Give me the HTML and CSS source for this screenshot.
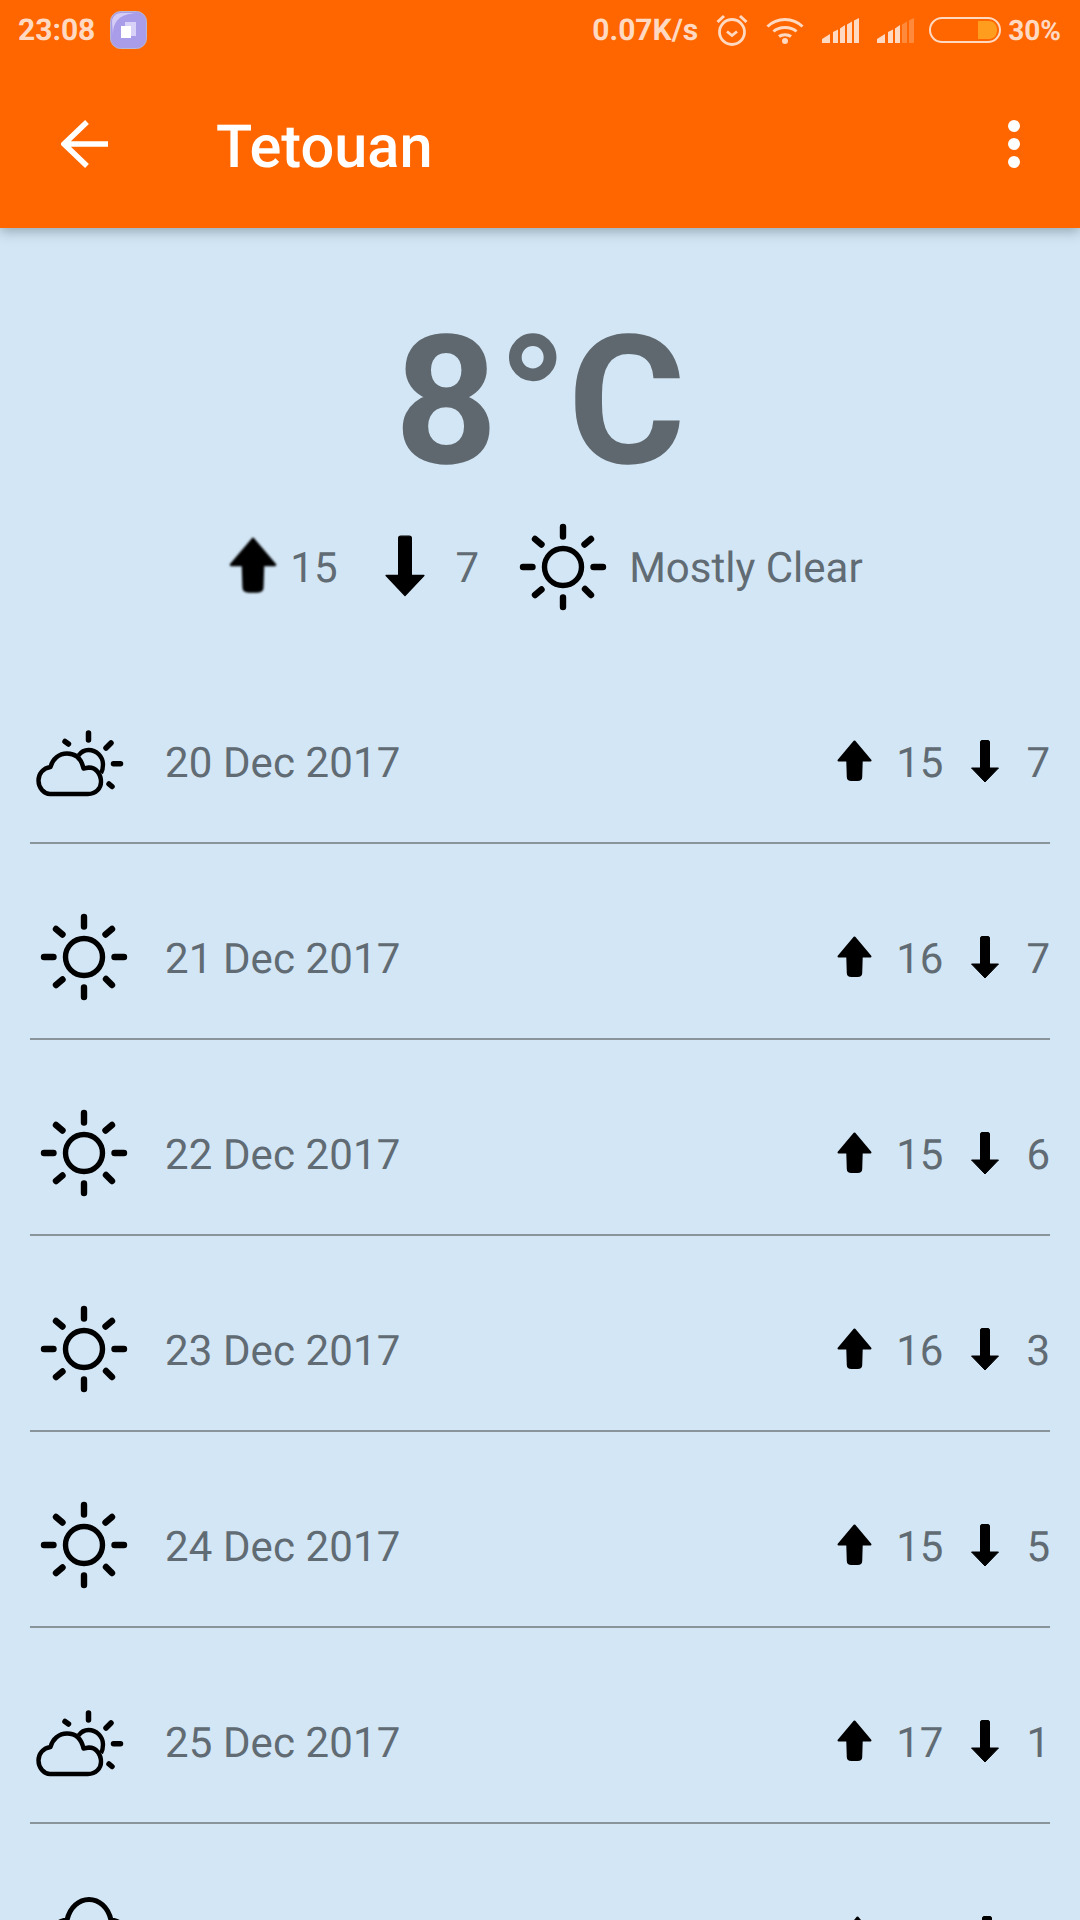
FILE: index.html
```html
<!DOCTYPE html>
<html lang="en">
<head>
<meta charset="utf-8">
<title>Tetouan</title>
<link rel="stylesheet" href="styles.css">
</head>
<body>
<svg class="defs" width="0" height="0" aria-hidden="true">
  <symbol id="sun" viewBox="0 0 88 88">
    <circle cx="44" cy="44" r="18.500" fill="none" stroke="#000" stroke-width="5.400"/>
    <g stroke="#000" stroke-width="6.400" stroke-linecap="round">
      <path d="M44 4V13.500M44 74.500V84M4 44H13.500M74.500 44H84M16 16L22.500 21.500M72 16L65.500 21.500M16 72L22.500 66.500M72 72L66 66"/>
    </g>
  </symbol>
  <symbol id="cloudsun" viewBox="0 0 90 70">
    <g fill="none" stroke="#000" stroke-width="4.400" stroke-linejoin="round">
      <path d="M44.500 25.500C47 22 50.500 20 54.500 20C62.500 20 69 26.500 69 34.500C69 37.500 68.500 40.500 67 43"/>
      <path d="M16 64H54C62 64 67 58 67 52C67 44 62 37.500 55 37.500L49.500 38.500C47 27 40 23.500 33 23.500C25 23.500 18.500 29 16.500 37C9 38 4.500 44 4.500 50.500C4.500 58 10 64 16 64Z"/>
    </g>
    <g stroke="#000" stroke-width="5.500" stroke-linecap="round">
      <path d="M54.500 3V10M77 13L72 18M79.500 33.700H86.500M75 54L78 56.500M31 11.500L34.500 14"/>
    </g>
  </symbol>
  <symbol id="cloud" viewBox="0 0 88 88">
    <path d="M10 50C10 36 16 28 27 27C30 14 39 6.500 49 6.500C59 6.500 68 14 71 27C82 28 88 36 88 50" fill="none" stroke="#000" stroke-width="5"/>
  </symbol>
  <symbol id="up" viewBox="0 0 34 42" preserveAspectRatio="none">
    <path d="M17 1.500L32.500 20.500H24L23.500 37C23.500 39 22 40 20 40H14C12 40 10.500 39 10.500 37L10 20.500H1.500Z" fill="#000" stroke="#000" stroke-width="2" stroke-linejoin="round"/>
  </symbol>
  <symbol id="down" viewBox="0 0 30 44" preserveAspectRatio="none">
    <path d="M10.500 3C10.500 2 11 1.500 12 1.500H18C19 1.500 19.500 2 19.500 3V29H28.500L15 43L1.500 29H10.500Z" fill="#000" stroke="#000" stroke-linejoin="round"/>
  </symbol>
</svg>

<header class="header">
  <div class="status">
    <span class="status-time">23:08</span>
    <svg class="app-badge" viewBox="0 0 37 38">
      <rect x="0.500" y="0.500" width="36" height="37" rx="10" fill="#a99ce9" stroke="#b9b9d0"/>
      <path d="M3 24C3 10 10 3 26 2H11C6 2 2 6 2 11Z" fill="#d5ccf6"/>
      <rect x="15" y="11" width="11" height="14" fill="#d8d2f8"/>
      <rect x="11" y="15" width="10" height="12" fill="#fff"/>
    </svg>
    <span class="status-spacer"></span>
    <span class="status-text">0.07K/s</span>
    <svg class="ic-alarm" viewBox="0 0 32 32">
      <g fill="none" stroke="#ffd9c2" stroke-width="2.800">
        <circle cx="16" cy="18" r="12.500"/>
        <path d="M11 17.500L16 21.500L21 17.500"/>
      </g>
      <path d="M1.500 8L8 2M30.500 8L24 2" stroke="#ffd9c2" stroke-width="3" fill="none"/>
    </svg>
    <svg class="ic-wifi" viewBox="0 0 38 28">
      <g fill="none" stroke="#ffd9c2" stroke-width="3">
        <path d="M1.500 10.500C11 1 27 1 36.500 10.500"/>
        <path d="M7.500 15.500C13 10 25 10 30.500 15.500"/>
        <path d="M13 20.500C16 18 22 18 25 20.500"/>
      </g>
      <circle cx="19" cy="25" r="3" fill="#ffd9c2"/>
    </svg>
    <svg class="ic-signal" viewBox="0 0 37 25">
      <path d="M0 25V21L8 16V25ZM11 25V14L16 11.500V25ZM18 25V10.500L23 7V25ZM25 25V6.500L30 3.500V25ZM32 25V2.500L37 0V25Z" fill="#ffd9c2"/>
    </svg>
    <svg class="ic-signal" viewBox="0 0 37 25">
      <path d="M0 25V21L8 16V25ZM11 25V14L16 11.500V25ZM18 25V10.500L23 7V25Z" fill="#ffd9c2"/>
      <path d="M25 25V6.500L30 3.500V25ZM32 25V2.500L37 0V25Z" fill="#ff8a3c"/>
    </svg>
    <svg class="ic-battery" viewBox="0 0 72 26">
      <rect x="1" y="1" width="70" height="24" rx="12" fill="none" stroke="#ffd9c2" stroke-width="2"/>
      <path d="M49 4H60C65 4 68 8 68 13C68 18 65 22 60 22H49Z" fill="#ff9d1e"/>
    </svg>
    <span class="status-text status-pct">30%</span>
  </div>
  <div class="toolbar">
    <svg class="ic-back" viewBox="0 0 48 48">
      <path d="M47 24H3M26 2L3 24L26 46" fill="none" stroke="#fff" stroke-width="5.500"/>
    </svg>
    <h1 class="title">Tetouan</h1>
    <span class="more"><i></i><i></i><i></i></span>
  </div>
</header>

<main class="content">
  <section class="hero">
    <div class="temp">8°C</div>
    <div class="today">
      <svg class="ic-up-lg"><use href="#up"/></svg>
      <span class="today-val">15</span>
      <svg class="ic-down-lg"><use href="#down"/></svg>
      <span class="today-val today-low">7</span>
      <svg class="ic-sun"><use href="#sun"/></svg>
      <span class="today-desc">Mostly Clear</span>
    </div>
  </section>

  <ul class="days">
    <li class="day">
      <svg class="ic-cloudsun"><use href="#cloudsun"/></svg>
      <span class="date">20 Dec 2017</span>
      <svg class="ic-up"><use href="#up"/></svg><span class="hi">15</span>
      <svg class="ic-down"><use href="#down"/></svg><span class="lo">7</span>
    </li>
    <li class="day">
      <svg class="ic-sun"><use href="#sun"/></svg>
      <span class="date">21 Dec 2017</span>
      <svg class="ic-up"><use href="#up"/></svg><span class="hi">16</span>
      <svg class="ic-down"><use href="#down"/></svg><span class="lo">7</span>
    </li>
    <li class="day">
      <svg class="ic-sun"><use href="#sun"/></svg>
      <span class="date">22 Dec 2017</span>
      <svg class="ic-up"><use href="#up"/></svg><span class="hi">15</span>
      <svg class="ic-down"><use href="#down"/></svg><span class="lo">6</span>
    </li>
    <li class="day">
      <svg class="ic-sun"><use href="#sun"/></svg>
      <span class="date">23 Dec 2017</span>
      <svg class="ic-up"><use href="#up"/></svg><span class="hi">16</span>
      <svg class="ic-down"><use href="#down"/></svg><span class="lo">3</span>
    </li>
    <li class="day">
      <svg class="ic-sun"><use href="#sun"/></svg>
      <span class="date">24 Dec 2017</span>
      <svg class="ic-up"><use href="#up"/></svg><span class="hi">15</span>
      <svg class="ic-down"><use href="#down"/></svg><span class="lo">5</span>
    </li>
    <li class="day">
      <svg class="ic-cloudsun"><use href="#cloudsun"/></svg>
      <span class="date">25 Dec 2017</span>
      <svg class="ic-up"><use href="#up"/></svg><span class="hi">17</span>
      <svg class="ic-down"><use href="#down"/></svg><span class="lo">1</span>
    </li>
    <li class="day">
      <svg class="ic-sun"><use href="#cloud"/></svg>
      <span class="date"></span>
      <svg class="ic-up"><use href="#up"/></svg><span class="hi"></span>
      <svg class="ic-down"><use href="#down"/></svg><span class="lo"></span>
    </li>
  </ul>
</main>
</body>
</html>
```

FILE: styles.css
```css
* { box-sizing: border-box; }

html, body {
  margin: 0;
  height: 1920px;
  overflow: hidden;
  background: #d3e6f5;
  font-family: Roboto, "Liberation Sans", sans-serif;
  color: #616b73;
  text-rendering: geometricPrecision;
}

.defs { display: block; height: 0; }

.header {
  position: relative;
  height: 228px;
  background: #ff6600;
  box-shadow: 0 3px 12px rgba(60, 80, 90, 0.45);
  display: flex;
  flex-direction: column;
}

.status {
  height: 60px;
  padding: 0 19px 0 18px;
  display: flex;
  align-items: center;
  color: #ffd9c2;
  font-weight: 700;
  font-size: 30px;
}

.status-time { margin-right: 15px; }
.app-badge { width: 37px; height: 38px; }
.status-spacer { flex: 1; }
.status-pct { font-size: 28px; }
.ic-alarm { width: 32px; height: 32px; margin: 0 18px; }
.ic-wifi { width: 38px; height: 28px; margin-right: 18px; }
.ic-signal { width: 37px; height: 25px; margin-right: 18px; }
.ic-signal + .ic-signal { margin-right: 15px; }
.ic-battery { width: 72px; height: 26px; margin-right: 7px; }

.toolbar {
  flex: 1;
  display: flex;
  align-items: center;
  padding: 0 60px 0 61px;
}

.ic-back { width: 48px; height: 48px; margin-right: 107px; }

.title {
  margin: 5px 0 0;
  flex: 1;
  color: #fff;
  font-size: 59.500px;
  font-weight: 500;
}

.more { display: flex; flex-direction: column; gap: 6px; }
.more i { display: block; width: 12px; height: 12px; border-radius: 50%; background: #fff; }

.content {
  height: 1692px;
  overflow: hidden;
}

.hero {
  height: 420px;
  display: flex;
  flex-direction: column;
  align-items: center;
}

.temp {
  margin-top: 64px;
  font-size: 180px;
  line-height: 220px;
  font-weight: 700;
  color: #5f686f;
}

.today {
  margin-top: 11px;
  display: flex;
  align-items: center;
  font-size: 42px;
  margin-left: 10px;
}

.today-val, .today-desc { padding-top: 2px; }

.ic-up-lg { width: 48px; height: 57px; margin: 0 13px 4px 2px; filter: blur(0.8px); }
.ic-down-lg { width: 42px; height: 63px; margin: 0 30px 4px 46px; filter: blur(0.7px); }
.today-low { margin-right: 40px; }
.today-desc { margin-left: 22px; }

.ic-sun { width: 88px; height: 88px; flex: none; filter: blur(0.35px); }

.days {
  list-style: none;
  margin: 0 30px;
  padding: 0;
}

.day {
  height: 196px;
  padding-top: 34px;
  display: flex;
  align-items: center;
  border-bottom: 2px solid #8a949b;
  font-size: 42px;
}

.day > .ic-sun { margin: 0 37px 2px 10px; }
.ic-cloudsun { width: 90px; height: 70px; margin: 6px 41px 0 4px; flex: none; filter: blur(0.35px); }

.date { flex: 1; padding-top: 2px; letter-spacing: 0.1px; }

.ic-up { width: 35px; height: 42px; margin: 0 24px 2px 2px; filter: blur(0.6px); }
.ic-down { width: 30px; height: 44px; margin: 0 26px 2px 27px; filter: blur(0.5px); }
.hi { min-width: 46px; padding-top: 2px; }
.lo { min-width: 22px; padding-top: 2px; text-align: right; }
```
